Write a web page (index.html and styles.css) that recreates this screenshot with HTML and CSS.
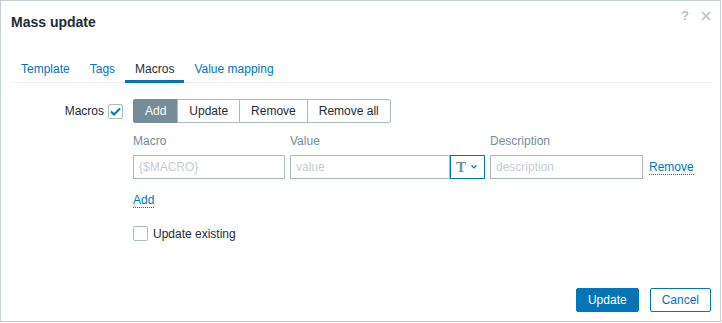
FILE: index.html
```html
<!DOCTYPE html>
<html lang="en">
<head>
    <meta charset="UTF-8">
    <meta name="viewport" content="width=device-width, initial-scale=1.0">
    <title>Mass update</title>
    <link rel="stylesheet" href="styles.css">
</head>
<body>
    <div class="dialog">
        <div class="dialog-head">
            <h4>Mass update</h4>
            <div class="head-icons">
                <span class="help">?</span>
                <svg class="close" width="10" height="10" viewBox="0 0 10 10">
                    <path d="M1 1 L9 9 M9 1 L1 9" stroke="#b5c1c8" stroke-width="1.6" fill="none"/>
                </svg>
            </div>
        </div>

        <ul class="tabs">
            <li><a href="#">Template</a></li>
            <li><a href="#">Tags</a></li>
            <li class="active"><a href="#">Macros</a></li>
            <li><a href="#">Value mapping</a></li>
        </ul>

        <div class="form">
            <div class="form-row">
                <div class="form-label">
                    <span>Macros</span>
                    <span class="checkbox checked">
                        <svg width="11" height="9" viewBox="0 0 11 9">
                            <path d="M1 4.5 L4 7.5 L10 1.5" stroke="#0275b8" stroke-width="2" fill="none"/>
                        </svg>
                    </span>
                </div>
                <div class="btn-group">
                    <button class="seg active">Add</button>
                    <button class="seg">Update</button>
                    <button class="seg">Remove</button>
                    <button class="seg">Remove all</button>
                </div>
            </div>

            <div class="macro-table">
                <div class="col-head">Macro</div>
                <div class="col-head">Value</div>
                <div class="col-head">Description</div>
                <div></div>

                <input type="text" placeholder="{$MACRO}">
                <div class="value-cell">
                    <input type="text" placeholder="value">
                    <button class="type-btn">
                        <span class="t-glyph">T</span>
                        <svg width="6" height="4" viewBox="0 0 6 4">
                            <path d="M0.5 0.5 L3 3 L5.5 0.5" stroke="#0275b8" stroke-width="1.2" fill="none"/>
                        </svg>
                    </button>
                </div>
                <input type="text" placeholder="description">
                <a href="#" class="link remove-link">Remove</a>
            </div>

            <div class="add-row">
                <a href="#" class="link">Add</a>
            </div>

            <label class="check-row">
                <span class="checkbox"></span>
                <span>Update existing</span>
            </label>
        </div>

        <div class="dialog-foot">
            <button class="btn primary">Update</button>
            <button class="btn alt">Cancel</button>
        </div>
    </div>
</body>
</html>
```

FILE: styles.css
```css
body {
    margin: 0;
    font-family: "Liberation Sans", Arial, sans-serif;
    font-size: 12px;
    color: #1f2c33;
    background: #fff;
}

.dialog {
    width: 721px;
    height: 322px;
    box-sizing: border-box;
    border: 1px solid #c5ced3;
    background: #fff;
    padding: 0 9px 9px 10px;
    display: flex;
    flex-direction: column;
}

.dialog-head {
    display: flex;
    align-items: flex-start;
    justify-content: space-between;
    padding-top: 12px;
}

h4 {
    margin: 0;
    font-size: 14px;
    line-height: 18px;
    font-weight: bold;
    color: #1f2c33;
}

.head-icons {
    display: flex;
    align-items: center;
    gap: 12px;
    margin-top: -3px;
    height: 12px;
}

.help {
    font-size: 13px;
    font-weight: bold;
    line-height: 12px;
    color: #b5c1c8;
}

.close {
    display: block;
}

.tabs {
    list-style: none;
    margin: 22px 0 0 0;
    padding: 0;
    display: flex;
    border-bottom: 1px solid #ebeef0;
}

.tabs li {
    padding: 9px 10px 4px;
    line-height: 14px;
    border-bottom: 3px solid transparent;
    margin-bottom: -1px;
}

.tabs a {
    color: #0275b8;
    text-decoration: none;
}

.tabs li.active {
    border-bottom-color: #0275b8;
}

.tabs li.active a {
    color: #1f2c33;
}

.form {
    padding-top: 16px;
    padding-left: 122px;
}

.form-row {
    display: flex;
    align-items: center;
    height: 24px;
}

.form-label {
    width: 112px;
    margin-left: -122px;
    margin-right: 10px;
    display: flex;
    align-items: center;
    justify-content: flex-end;
    gap: 4px;
}

.checkbox {
    width: 15px;
    height: 15px;
    box-sizing: border-box;
    border: 1px solid #acbbc2;
    border-radius: 2px;
    display: inline-flex;
    align-items: center;
    justify-content: center;
    background: #fff;
}

.btn-group {
    display: flex;
}

.seg {
    font-family: inherit;
    font-size: 12px;
    height: 24px;
    padding: 0 11px;
    border: 1px solid #acbbc2;
    margin-left: -1px;
    background: #fff;
    color: #1f2c33;
}

.seg:first-child {
    margin-left: 0;
    border-radius: 2px 0 0 2px;
}

.seg:last-child {
    border-radius: 0 2px 2px 0;
}

.seg.active {
    background: #768d99;
    border-color: #768d99;
    color: #fff;
}

.macro-table {
    display: grid;
    grid-template-columns: 152px 195px 153px auto;
    column-gap: 5px;
    row-gap: 5px;
    margin-top: 9px;
    align-items: center;
}

.col-head {
    line-height: 18px;
    color: #768d99;
}

input {
    font-family: inherit;
    font-size: 12px;
    height: 24px;
    box-sizing: border-box;
    border: 1px solid #acbbc2;
    padding: 0 5px;
    color: #1f2c33;
    width: 100%;
    margin: 0;
}

input::placeholder {
    color: #c5ced3;
}

.value-cell {
    display: flex;
}

.value-cell input {
    width: 160px;
    flex: none;
}

.type-btn {
    width: 35px;
    height: 24px;
    box-sizing: border-box;
    border: 1px solid #0275b8;
    background: #fff;
    padding: 0 0 0 5px;
    display: flex;
    align-items: center;
    gap: 5px;
}

.t-glyph {
    font-family: "Liberation Serif", "Times New Roman", serif;
    font-size: 15px;
    font-weight: bold;
    color: #768d99;
    line-height: 14px;
}

.link {
    color: #0275b8;
    text-decoration: none;
    border-bottom: 1px dotted #0275b8;
}

.remove-link {
    justify-self: start;
    margin-left: 1px;
    line-height: 14px;
}

.add-row {
    margin-top: 12px;
    line-height: 18px;
}

.check-row {
    display: flex;
    align-items: center;
    gap: 5px;
    margin-top: 17px;
    height: 15px;
}

.dialog-foot {
    margin-top: auto;
    display: flex;
    justify-content: flex-end;
    gap: 11px;
}

.btn {
    font-family: inherit;
    font-size: 12px;
    height: 24px;
    padding: 0 11px;
    border: 1px solid #0275b8;
    border-radius: 2px;
}

.btn.primary {
    background: #0275b8;
    color: #fff;
}

.btn.alt {
    background: #fff;
    color: #0275b8;
}
```
